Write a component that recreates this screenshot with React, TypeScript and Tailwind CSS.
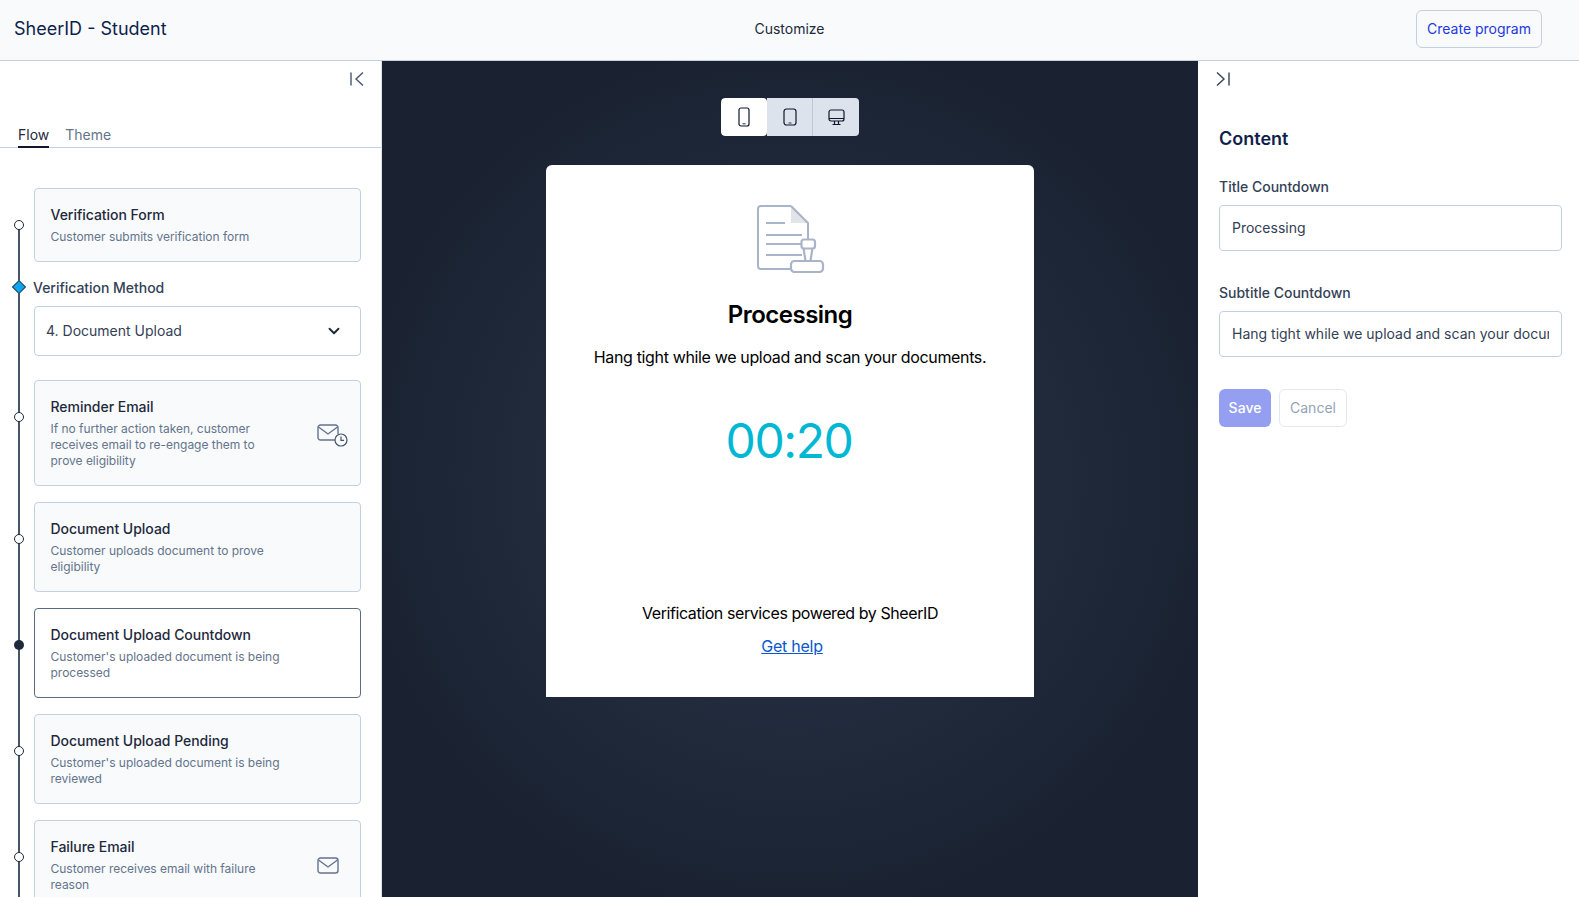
import { ChevronDown } from "lucide-react";

const font = { fontFamily: "Inter, 'Noto Sans', sans-serif" };

function CollapseLeft() {
  return (
    <svg width="16" height="16" viewBox="0 0 16 16" fill="none" stroke="#475569" strokeWidth="1.4">
      <path d="M2 1.5v13" />
      <path d="M14 1.5 7 8l7 6.5" />
    </svg>
  );
}

function CollapseRight() {
  return (
    <svg width="16" height="16" viewBox="0 0 16 16" fill="none" stroke="#334155" strokeWidth="1.4">
      <path d="M14 1.5v13" />
      <path d="M2 1.5 9 8l-7 6.5" />
    </svg>
  );
}

function MailIcon() {
  return (
    <svg width="22" height="17" viewBox="0 0 22 17" fill="none" stroke="#64748b" strokeWidth="1.4">
      <rect x="1" y="1" width="20" height="15" rx="2.5" />
      <path d="M1.5 3 11 10l9.500-7" />
    </svg>
  );
}

function MailClockIcon() {
  return (
    <svg width="31" height="23" viewBox="0 0 31 23" fill="none" stroke="#64748b" strokeWidth="1.4">
      <path d="M18 16H3.500a2.500 2.500 0 0 1-2.500-2.500V3.500A2.500 2.500 0 0 1 3.500 1h15A2.500 2.500 0 0 1 21 3.500V10" />
      <path d="M1.500 3 11 10l9.500-7" />
      <circle cx="24" cy="16" r="6" fill="#f8fafc" stroke="#475569" strokeWidth="1.2" />
      <path d="M24 12.500v3.800h3" stroke="#475569" strokeWidth="1.2" />
    </svg>
  );
}

function PhoneIcon() {
  return (
    <svg width="12" height="20" viewBox="0 0 12 20" fill="none" stroke="#0f172a" strokeWidth="1.2">
      <rect x="1" y="1" width="10" height="18" rx="2" />
      <path d="M4.500 16.800h3" strokeWidth="1.600" stroke="#64748b" />
    </svg>
  );
}

function TabletIcon() {
  return (
    <svg width="14" height="18" viewBox="0 0 14 18" fill="none" stroke="#0f172a" strokeWidth="1.2">
      <rect x="1" y="1" width="12" height="16" rx="2.500" />
      <path d="M5.500 15h3" strokeWidth="1.600" stroke="#64748b" />
    </svg>
  );
}

function DesktopIcon() {
  return (
    <svg width="17" height="17" viewBox="0 0 17 17" fill="none" stroke="#0f172a" strokeWidth="1.2">
      <rect x="1" y="1" width="15" height="11" rx="2" />
      <path d="M1 9.500h15" />
      <path d="M6.500 12v3M10.500 12v3M4.500 15.500h8" />
    </svg>
  );
}

function DocStampIcon() {
  return (
    <svg width="68" height="68" viewBox="0 0 68 68" fill="none" stroke="#aab4c8" strokeWidth="2">
      <path d="M34 1v17h17z" fill="#e2e4e8" stroke="none" />
      <path d="M34 1H4a3 3 0 0 0-3 3v57a3 3 0 0 0 3 3h30" />
      <path d="M34 1l17 17v16" />
      <path d="M9 18h19M9 30h36M9 39h36M9 50h36" />
      <path d="M46.500 43l2 13h5l2-13" fill="#fff" strokeWidth="2.200" />
      <rect x="44.500" y="34.500" width="13.500" height="9" rx="2.500" fill="#fff" strokeWidth="2.200" />
      <rect x="34" y="56" width="32" height="11" rx="3.500" fill="#fff" strokeWidth="2.200" />
    </svg>
  );
}

type Step = { title: string; lines: string[]; icon?: "mail" | "mailclock"; active?: boolean };

function StepCard({ step }: { step: Step }) {
  return (
    <div className="relative pl-[34px] pr-[20px]">
      {step.active ? (
        <span className="absolute left-[14px] top-[32px] w-[10px] h-[10px] rounded-full bg-[#1e293b]" />
      ) : (
        <span className="absolute left-[14px] top-[32px] w-[10px] h-[10px] rounded-full bg-white border border-[#1e293b]" />
      )}
      <div
        className={`flex items-center justify-between rounded-[4px] border pl-[15.5px] pr-[20px] pt-[16px] pb-[16px] ${
          step.active ? "bg-white border-[#5b6b84]" : "bg-[#f8fafc] border-[#c3d0e0]"
        }`}
      >
        <div>
          <div className="text-[14px] leading-[20px] font-medium tracking-[-0.03px] text-[#1e293b] mb-[4px]">{step.title}</div>
          {step.lines.map((l) => (
            <div key={l} className="text-[12px] leading-[16px] tracking-[-0.02px] text-[#64748b]">{l}</div>
          ))}
        </div>
        {step.icon === "mail" && (
          <div className="mr-[1px]"><MailIcon /></div>
        )}
        {step.icon === "mailclock" && (
          <div className="-mr-[8px] mt-[4px]"><MailClockIcon /></div>
        )}
      </div>
    </div>
  );
}

export default function App() {
  const after: Step[] = [
    {
      title: "Reminder Email",
      lines: ["If no further action taken, customer", "receives email to re-engage them to", "prove eligibility"],
      icon: "mailclock",
    },
    { title: "Document Upload", lines: ["Customer uploads document to prove", "eligibility"] },
    { title: "Document Upload Countdown", lines: ["Customer's uploaded document is being", "processed"], active: true },
    { title: "Document Upload Pending", lines: ["Customer's uploaded document is being", "reviewed"] },
    { title: "Failure Email", lines: ["Customer receives email with failure", "reason"], icon: "mail" },
  ];

  return (
    <div className="h-screen flex flex-col overflow-hidden bg-white" style={font}>
      {/* Header */}
      <header className="h-[61px] shrink-0 grid grid-cols-3 items-center bg-[#f8fafc] border-b border-[#c3d0e0] pl-[14px] pr-[37px] pb-[2px]">
        <div className="text-[18px] leading-[28px] text-[#0f1f4b]">SheerID - Student</div>
        <div className="text-[14px] text-center text-[#1e293b] ml-[23px] pb-[1px]">Customize</div>
        <div className="flex justify-end">
          <button className="h-[38px] px-[10px] pb-[1px] rounded-[6px] border border-[#c3d0e0] text-[14px] text-[#2438e0]">
            Create program
          </button>
        </div>
      </header>

      <div className="flex flex-1 min-h-0">
        {/* Left panel */}
        <aside className="w-[382px] shrink-0 border-r border-[#dfe3ea] overflow-hidden">
          <div className="flex justify-end pt-[10px] pr-[16px] h-[62px]">
            <CollapseLeft />
          </div>
          <div className="flex gap-4 px-[18px] pt-[2px] h-[25px] border-b border-[#c3d0e0] text-[14px] leading-[20px]">
            <div className="h-[23px] border-b-2 border-[#0f172a] text-[#1e293b]">Flow</div>
            <div className="text-[#64748b]">Theme</div>
          </div>

          <div className="relative pt-[40px]">
            <div className="absolute left-[18px] top-[78px] bottom-0 w-[2px] bg-[#475569]" />
            <StepCard
              step={{ title: "Verification Form", lines: ["Customer submits verification form"] }}
            />

            <div className="relative pl-[33px] pr-[20px] mt-[16px]">
              <span className="absolute left-[14px] top-[4px] w-[10px] h-[10px] rotate-45 bg-[#0ea5f0] border border-[#334155]" />
              <div className="text-[14px] leading-[20px] font-medium tracking-[-0.03px] text-[#334155] mb-[8px]">Verification Method</div>
              <div className="ml-[1px] h-[50px] flex items-center justify-between rounded-[4px] border border-[#c3d0e0] bg-white pl-[11px] pr-[17px] text-[14px] text-[#334155]">
                <span className="pb-[1px]">4. Document Upload</span>
                <ChevronDown className="w-[18px] h-[18px] text-[#1e293b]" strokeWidth={2.5} />
              </div>
            </div>

            <div className="mt-[24px] flex flex-col gap-[16px]">
              {after.map((s) => (
                <StepCard key={s.title} step={s} />
              ))}
            </div>
          </div>
        </aside>

        {/* Preview */}
        <main className="flex-1 min-w-0 flex flex-col items-center overflow-hidden bg-[radial-gradient(circle_at_center,#2a3649_0%,#1a2232_75%)]">
          <div className="mt-[37px] flex h-[38px] rounded-[4px] overflow-hidden">
            <div className="w-[46px] bg-white flex items-center justify-center rounded-[4px]"><PhoneIcon /></div>
            <div className="w-[46px] bg-[#dde3ed] flex items-center justify-center border-r border-[#bcc8d8]"><TabletIcon /></div>
            <div className="w-[46px] bg-[#dde3ed] flex items-center justify-center"><DesktopIcon /></div>
          </div>

          <div className="mt-[29px] w-[488px] h-[532px] bg-white rounded-t-[6px] flex flex-col items-center text-black">
            <div className="mt-[40px] ml-[2px]"><DocStampIcon /></div>
            <div className="mt-[26px] text-[24px] leading-[32px] font-semibold tracking-[-0.5px]">Processing</div>
            <div className="mt-[14px] text-[16px] leading-[24px] tracking-[-0.35px]">Hang tight while we upload and scan your documents.</div>
            <div className="mt-[42px] -ml-[2px] text-[48px] leading-[60px] tracking-[-1.4px] text-[#00b8d4]">00:20</div>
            <div className="mt-auto text-[16px] leading-[24px] tracking-[-0.42px]">Verification services powered by SheerID</div>
            <a className="mt-[9px] mb-[39px] ml-[4px] text-[16px] leading-[24px] tracking-[-0.25px] text-[#0b57d0] underline">Get help</a>
          </div>
        </main>

        {/* Right panel */}
        <aside className="w-[381px] shrink-0 pl-[21px] pr-[17px]">
          <div className="pt-[10px] h-[62px] -ml-[4px]"><CollapseRight /></div>
          <h2 className="mt-[2px] text-[18px] leading-[28px] font-semibold text-[#0f1f4b]">Content</h2>

          <label className="block mt-[24px] mb-[8px] text-[14px] leading-[20px] font-medium text-[#334155]">Title Countdown</label>
          <input
            readOnly
            value="Processing"
            className="w-full h-[46px] px-3 pb-[2px] rounded-[4px] border border-[#c3d0e0] text-[14px] text-[#334155] outline-none"
          />

          <label className="block mt-[32px] mb-[8px] text-[14px] leading-[20px] font-medium text-[#334155]">Subtitle Countdown</label>
          <input
            readOnly
            value="Hang tight while we upload and scan your documents."
            className="w-full h-[46px] px-3 pb-[2px] rounded-[4px] border border-[#c3d0e0] text-[14px] text-[#334155] outline-none"
          />

          <div className="mt-[32px] flex gap-2">
            <button className="h-[38px] w-[52px] pb-[2px] rounded-[6px] bg-[#949ff2] text-[14px] font-medium text-white">Save</button>
            <button className="h-[38px] w-[68px] pb-[2px] rounded-[6px] border border-[#e2e8f0] text-[14px] text-[#94a3b8]">Cancel</button>
          </div>
        </aside>
      </div>
    </div>
  );
}
